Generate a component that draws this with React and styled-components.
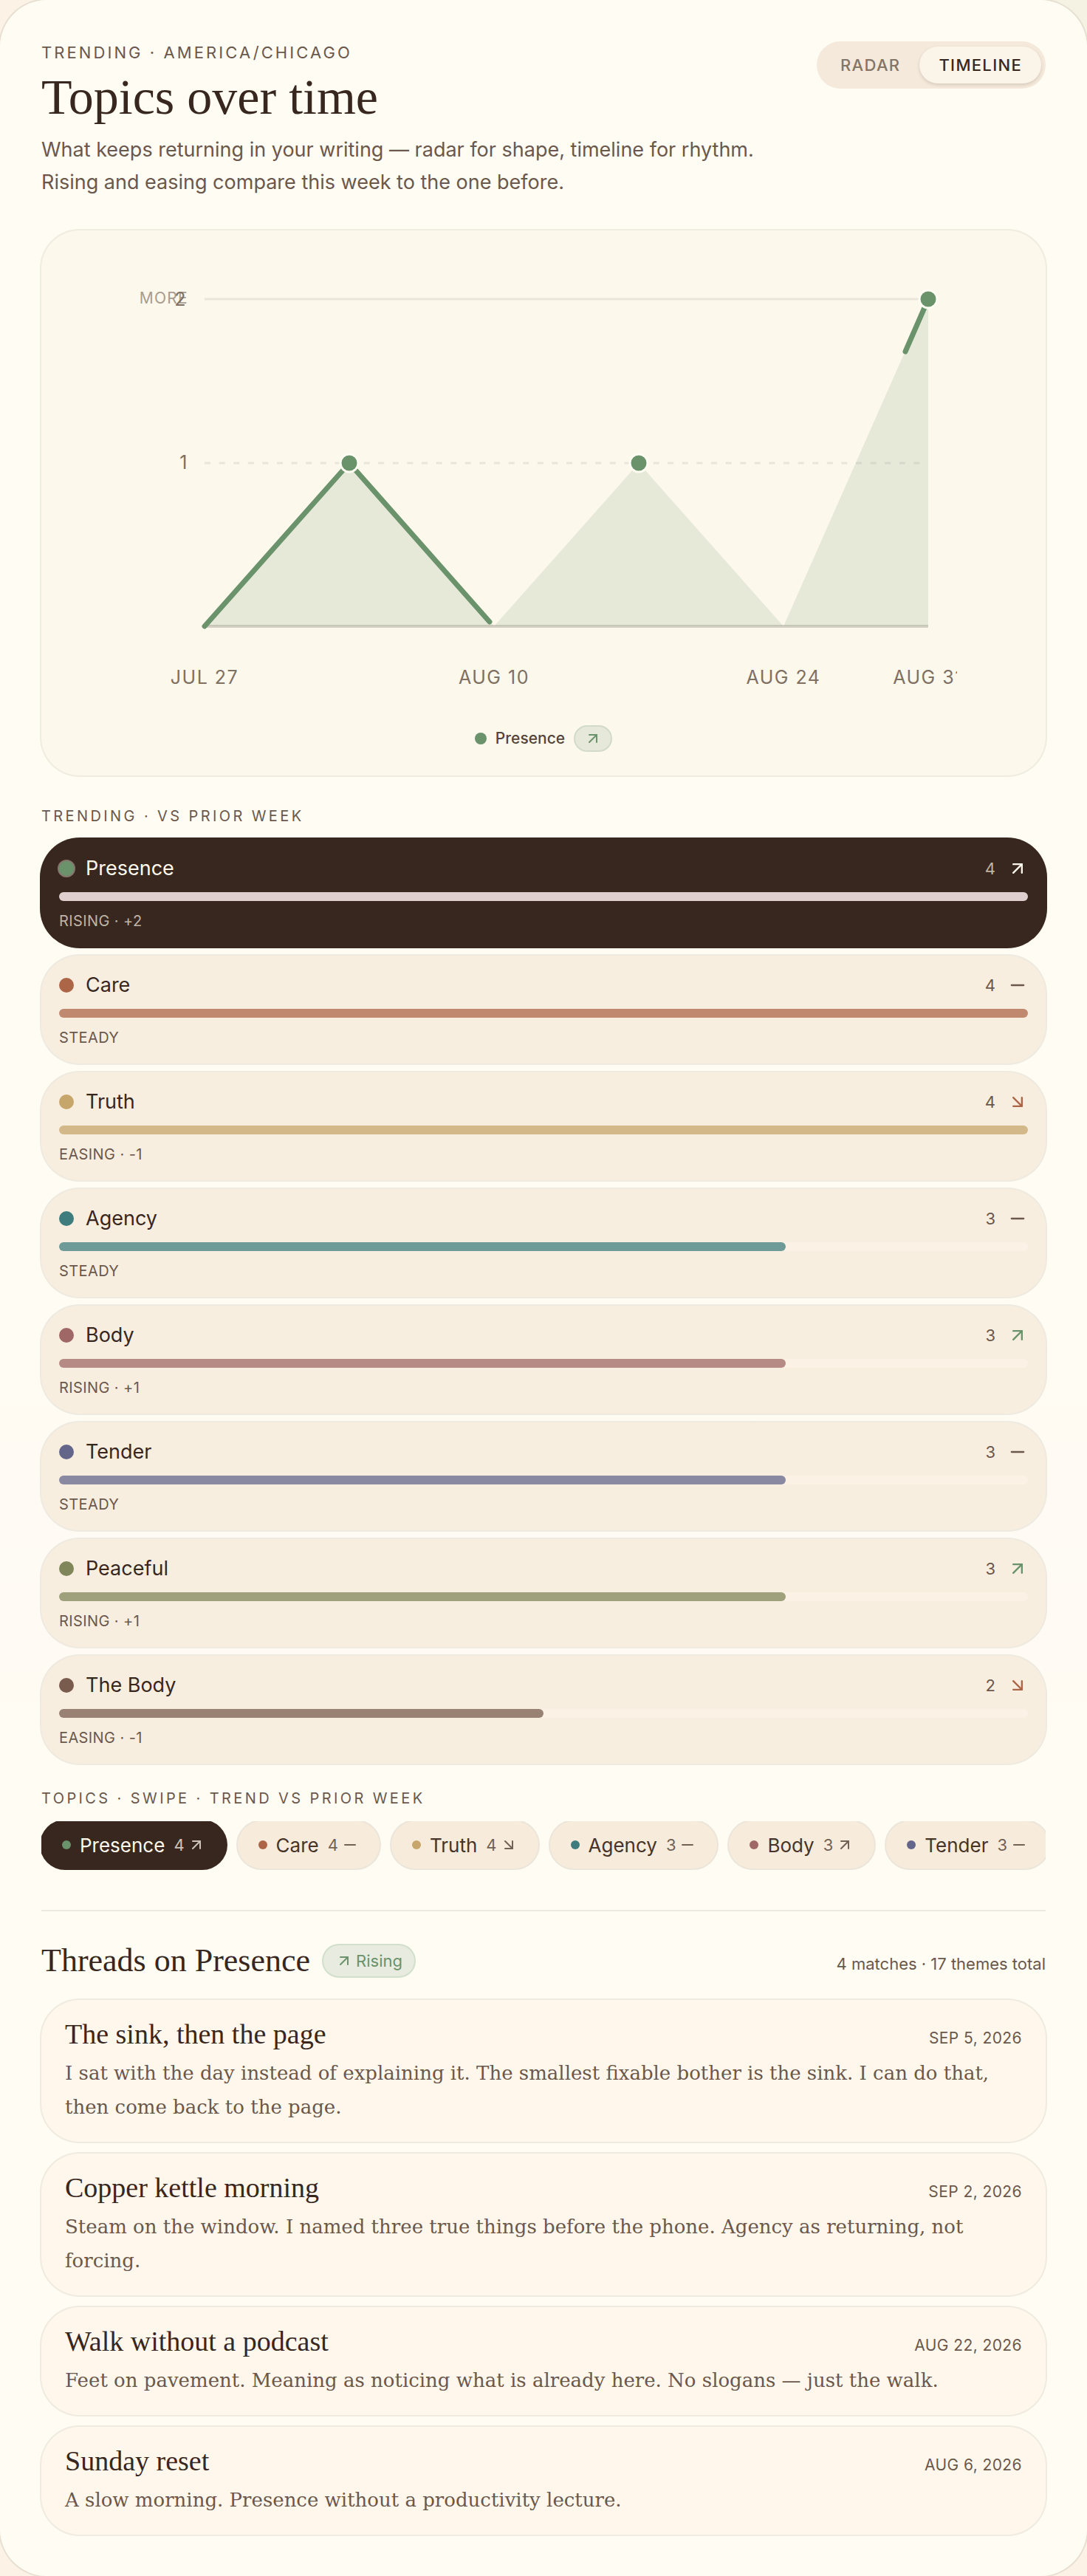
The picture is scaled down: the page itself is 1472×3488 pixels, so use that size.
import React, { useState } from 'react'
import styled, { createGlobalStyle } from 'styled-components'
import { ArrowUpRight, ArrowDownRight, Minus } from 'lucide-react'

const sans = "Inter, 'Open Sans', sans-serif"
const display = "'Liberation Serif', serif"
const reading = "'DejaVu Serif', serif"

const topics = [
  { name: 'Presence', count: 4, delta: 2, color: '#6a926b' },
  { name: 'Care', count: 4, delta: 0, color: '#ad6547' },
  { name: 'Truth', count: 4, delta: -1, color: '#c6a66b' },
  { name: 'Agency', count: 3, delta: 0, color: '#3f7c7e' },
  { name: 'Body', count: 3, delta: 1, color: '#9f6765' },
  { name: 'Tender', count: 3, delta: 0, color: '#64658b' },
  { name: 'Peaceful', count: 3, delta: 1, color: '#808659' },
  { name: 'The Body', count: 2, delta: -1, color: '#795c4e' }
]

const threads = [
  {
    title: 'The sink, then the page',
    date: 'Sep 5, 2026',
    text: 'I sat with the day instead of explaining it. The smallest fixable bother is the sink. I can do that, then come back to the page.'
  },
  {
    title: 'Copper kettle morning',
    date: 'Sep 2, 2026',
    text: 'Steam on the window. I named three true things before the phone. Agency as returning, not forcing.'
  },
  {
    title: 'Walk without a podcast',
    date: 'Aug 22, 2026',
    text: 'Feet on pavement. Meaning as noticing what is already here. No slogans — just the walk.'
  },
  {
    title: 'Sunday reset',
    date: 'Aug 6, 2026',
    text: 'A slow morning. Presence without a productivity lecture.'
  }
]

const maxCount = 4

const trendLabel = (delta) => {
  if (delta > 0) return `Rising · +${delta}`
  if (delta < 0) return `Easing · ${delta}`
  return 'Steady'
}

const TrendIcon = ({ delta, size }) => {
  if (delta > 0) return <ArrowUpRight size={size} aria-hidden='true' />
  if (delta < 0) return <ArrowDownRight size={size} aria-hidden='true' />
  return <Minus size={size} aria-hidden='true' />
}

const Timeline = () => (
  <ChartSvg viewBox='0 0 1120 622' role='img' aria-label='Presence by week'>
    <line x1='101' y1='61' x2='1081' y2='61' stroke='#e9e5d9' strokeWidth='3' />
    <line x1='101' y1='283' x2='1081' y2='283' stroke='#e9e5d9' strokeWidth='3' strokeDasharray='8 11.6' />
    <line x1='101' y1='504' x2='1081' y2='504' stroke='#d6d0c4' strokeWidth='4' />
    <path d='M101 504 L297 283 L493 504 L689 283 L885 504 L1081 61 V504 Z' fill='#6a926b' fillOpacity='0.15' />
    <path d='M101 504 L297 283 L487 498 M1050 132 L1081 61' fill='none' stroke='#6a926b' strokeWidth='7' strokeLinecap='round' strokeLinejoin='round' />
    {[[297, 283], [689, 283], [1081, 61]].map(([x, y]) => (
      <circle key={x} cx={x} cy={y} r='12' fill='#6a926b' stroke='#fffcf3' strokeWidth='3' />
    ))}
    <AxisNote x='79' y='67' textAnchor='end'>MORE</AxisNote>
    <AxisText x='77' y='70' textAnchor='end'>2</AxisText>
    <AxisText x='79' y='291' textAnchor='end'>1</AxisText>
    <AxisText x='101' y='582' textAnchor='middle'>JUL 27</AxisText>
    <AxisText x='493' y='582' textAnchor='middle'>AUG 10</AxisText>
    <AxisText x='885' y='582' textAnchor='middle'>AUG 24</AxisText>
    <AxisText x='1081' y='582' textAnchor='middle'>AUG 31</AxisText>
  </ChartSvg>
)

const App = () => {
  const [view, setView] = useState('timeline')
  const [selected, setSelected] = useState('Presence')

  return (
    <>
      <GlobalStyle />
      <Panel>
        <Header>
          <div>
            <Eyebrow>Trending · America/Chicago</Eyebrow>
            <Title>Topics over time</Title>
            <Intro>
              What keeps returning in your writing — radar for shape, timeline for rhythm.
              Rising and easing compare this week to the one before.
            </Intro>
          </div>
          <Toggle>
            <ToggleButton $active={view === 'radar'} onClick={() => setView('radar')}>Radar</ToggleButton>
            <ToggleButton $active={view === 'timeline'} onClick={() => setView('timeline')}>Timeline</ToggleButton>
          </Toggle>
        </Header>

        <ChartCard>
          <Timeline />
          <Legend>
            <Dot $color='#6a926b' $size={16} />
            Presence
            <LegendBadge><TrendIcon delta={1} size={24} /></LegendBadge>
          </Legend>
        </ChartCard>

        <SectionLabel>Trending · vs prior week</SectionLabel>
        <TopicList>
          {topics.map(({ name, count, delta, color }) => (
            <TopicRow key={name} $active={name === selected} onClick={() => setSelected(name)}>
              <RowHead>
                <Dot $color={color} $size={20} $ring={name === selected} />
                <TopicName>{name}</TopicName>
                <TopicCount>{count}</TopicCount>
                <RowTrend $delta={delta}><TrendIcon delta={delta} size={28} /></RowTrend>
              </RowHead>
              <Track>
                <Bar $color={color} style={{ width: `${(count / maxCount) * 100}%` }} />
              </Track>
              <Status>{trendLabel(delta)}</Status>
            </TopicRow>
          ))}
        </TopicList>

        <SectionLabel>Topics · swipe · trend vs prior week</SectionLabel>
        <Chips>
          {topics.map(({ name, count, delta, color }) => (
            <Chip key={name} $active={name === selected} onClick={() => setSelected(name)}>
              <Dot $color={color} $size={12} />
              {name}
              <ChipMeta>{count}<TrendIcon delta={delta} size={24} /></ChipMeta>
            </Chip>
          ))}
        </Chips>

        <Threads>
          <ThreadsHead>
            <ThreadsTitle>Threads on Presence</ThreadsTitle>
            <RisingBadge><TrendIcon delta={1} size={24} />Rising</RisingBadge>
            <Matches>4 matches · 17 themes total</Matches>
          </ThreadsHead>
          <ThreadList>
            {threads.map(({ title, date, text }) => (
              <Thread key={title}>
                <ThreadTop>
                  <ThreadTitle>{title}</ThreadTitle>
                  <ThreadDate>{date}</ThreadDate>
                </ThreadTop>
                <ThreadText>{text}</ThreadText>
              </Thread>
            ))}
          </ThreadList>
        </Threads>
      </Panel>
    </>
  )
}

const GlobalStyle = createGlobalStyle`
  * {
    box-sizing: border-box;
  }
  body {
    margin: 0;
    background: linear-gradient(225deg, #f5f2e3, #fcf2e6 30%);
    color: #38271e;
    font-family: ${sans};
  }
  h1, h2, h3, p {
    margin: 0;
    font-weight: 400;
  }
  button {
    border: 0;
    font-family: inherit;
    cursor: pointer;
  }
`
const Panel = styled.main`
  padding: 56px;
  border-radius: 64px;
  background: linear-gradient(#fffcf3 52%, #fefaf4 61%, #fffcf3 68%);
  box-shadow: 0 0 0 2px #e6dfd2;
`
const Header = styled.header`
  display: flex;
  justify-content: space-between;
  align-items: flex-start;
  margin-bottom: 43px;
`
const Eyebrow = styled.p`
  margin-bottom: 8px;
  color: #6b584c;
  font-size: 22px;
  line-height: 30px;
  letter-spacing: 0.14em;
  text-transform: uppercase;
`
const Title = styled.h1`
  margin-bottom: 13px;
  font-family: ${display};
  font-size: 68px;
  line-height: 74px;
`
const Intro = styled.p`
  max-width: 1000px;
  color: #6b584c;
  font-size: 27px;
  line-height: 44px;
`
const Toggle = styled.div`
  display: flex;
  flex-shrink: 0;
  padding: 7px 6px;
  border-radius: 32px;
  background: #f4e9da;
`
const ToggleButton = styled.button`
  padding: 0 26px;
  border-radius: 25px;
  background: ${({ $active }) => ($active ? '#fbf4e8' : 'transparent')};
  box-shadow: ${({ $active }) => ($active ? '0 2px 4px rgba(56, 39, 30, 0.16)' : 'none')};
  color: ${({ $active }) => ($active ? '#38271e' : '#857565')};
  font-size: 22px;
  font-weight: 500;
  line-height: 50px;
  letter-spacing: 0.06em;
  text-transform: uppercase;
`
const ChartCard = styled.section`
  display: flex;
  flex-direction: column;
  align-items: center;
  gap: 16px;
  padding: 32px;
  margin-bottom: 41px;
  border-radius: 52px;
  background: #fcf8ec;
  box-shadow: 0 0 0 2px #efece0;
`
const ChartSvg = styled.svg`
  display: block;
  width: 100%;
  max-width: 1120px;
`
const AxisText = styled.text`
  fill: #7f7062;
  font-size: 25px;
  letter-spacing: 0.06em;
`
const AxisNote = styled.text`
  fill: #a89c8e;
  font-size: 21px;
  letter-spacing: 0.06em;
`
const Legend = styled.div`
  display: flex;
  align-items: center;
  gap: 12px;
  color: #55443a;
  font-size: 21px;
  font-weight: 500;
  line-height: 36px;
`
const Dot = styled.span`
  flex-shrink: 0;
  width: ${({ $size }) => $size}px;
  height: ${({ $size }) => $size}px;
  border-radius: 50%;
  background: ${({ $color }) => $color};
  box-shadow: ${({ $ring }) => ($ring ? '0 0 0 2px #85776e' : 'none')};
`
const LegendBadge = styled.span`
  display: flex;
  align-items: center;
  justify-content: center;
  width: 52px;
  height: 36px;
  border: 2px solid #d2dbc8;
  border-radius: 18px;
  background: #e6e9da;
  color: #6a926b;
`
const SectionLabel = styled.h2`
  margin-bottom: 17px;
  color: #6b584c;
  font-size: 20px;
  line-height: 28px;
  letter-spacing: 0.17em;
  text-transform: uppercase;
`
const TopicList = styled.div`
  display: flex;
  flex-direction: column;
  gap: 12px;
  margin-bottom: 33px;
`
const TopicRow = styled.button`
  display: block;
  width: 100%;
  padding: 20px 24px;
  border-radius: 52px;
  background: ${({ $active }) => ($active ? '#38271e' : '#f8eee0')};
  box-shadow: 0 0 0 2px ${({ $active }) => ($active ? '#38271e' : '#eeeae0')};
  color: ${({ $active }) => ($active ? '#fff8ea' : '#38271e')};
  text-align: left;

  --muted: ${({ $active }) => ($active ? '#bfb3a6' : '#6b584c')};
  --rising: ${({ $active }) => ($active ? '#fff8ea' : '#6a926b')};
  --track: ${({ $active }) => ($active ? '#4c3c33' : '#fbf2e5')};
  --bar: ${({ $active }) => ($active ? '#dfcfce' : 'initial')};
`
const RowHead = styled.span`
  display: flex;
  align-items: center;
  height: 40px;
`
const TopicName = styled.span`
  flex: 1;
  margin-left: 16px;
  font-size: 27px;
  line-height: 32px;
`
const TopicCount = styled.span`
  margin-right: 16px;
  color: var(--muted);
  font-size: 22px;
`
const RowTrend = styled.span`
  display: flex;
  color: ${({ $delta }) => {
    if ($delta > 0) return 'var(--rising)'
    return $delta < 0 ? '#ad6547' : '#6b584c'
  }};
`
const Track = styled.span`
  display: block;
  height: 12px;
  margin: 12px 0;
  border-radius: 6px;
  background: var(--track);
`
const Bar = styled.span`
  display: block;
  height: 100%;
  border-radius: 6px;
  background: var(--bar, color-mix(in srgb, ${({ $color }) => $color} 75%, #faf3e6));
`
const Status = styled.span`
  display: block;
  color: var(--muted);
  font-size: 20px;
  line-height: 30px;
  letter-spacing: 0.02em;
  text-transform: uppercase;
`
const Chips = styled.div`
  display: flex;
  gap: 16px;
  padding-bottom: 2px;
  margin-bottom: 54px;
  overflow: hidden;
`
const Chip = styled.button`
  display: flex;
  flex-shrink: 0;
  align-items: center;
  gap: 12px;
  height: 64px;
  padding: 0 28px;
  border-radius: 32px;
  background: ${({ $active }) => ($active ? '#38271e' : '#f7ebdc')};
  box-shadow: 0 0 0 2px ${({ $active }) => ($active ? '#38271e' : '#ebe5da')};
  color: ${({ $active }) => ($active ? '#fff8ea' : '#463429')};
  font-size: 26px;
`
const ChipMeta = styled.span`
  display: flex;
  align-items: center;
  gap: 4px;
  font-size: 22px;
  opacity: 0.75;
`
const Threads = styled.section`
  padding-top: 44px;
  border-top: 2px solid #ece9e0;
`
const ThreadsHead = styled.div`
  display: flex;
  align-items: center;
  gap: 16px;
  margin-bottom: 30px;
`
const ThreadsTitle = styled.h2`
  font-family: ${display};
  font-size: 44px;
  line-height: 46px;
`
const RisingBadge = styled.span`
  display: flex;
  align-items: center;
  gap: 4px;
  height: 46px;
  padding: 0 16px;
  border: 2px solid #d2dfcd;
  border-radius: 23px;
  background: #e8ebdf;
  color: #6a926b;
  font-size: 22px;
`
const Matches = styled.span`
  align-self: flex-end;
  margin-left: auto;
  color: #6b584c;
  font-size: 22px;
  line-height: 38px;
`
const ThreadList = styled.div`
  display: flex;
  flex-direction: column;
  gap: 16px;
`
const Thread = styled.article`
  padding: 24px 32px;
  border-radius: 52px;
  background: #fff7eb;
  box-shadow: 0 0 0 2px #efebe1;
`
const ThreadTop = styled.div`
  display: flex;
  align-items: baseline;
  justify-content: space-between;
  height: 44px;
  margin-bottom: 8px;
`
const ThreadTitle = styled.h3`
  font-family: ${display};
  font-size: 38px;
  line-height: 44px;
`
const ThreadDate = styled.time`
  color: #6b584c;
  font-size: 21px;
  letter-spacing: 0.02em;
  text-transform: uppercase;
`
const ThreadText = styled.p`
  color: #6b584c;
  font-family: ${reading};
  font-size: 26px;
  line-height: 46px;
`

export default App
